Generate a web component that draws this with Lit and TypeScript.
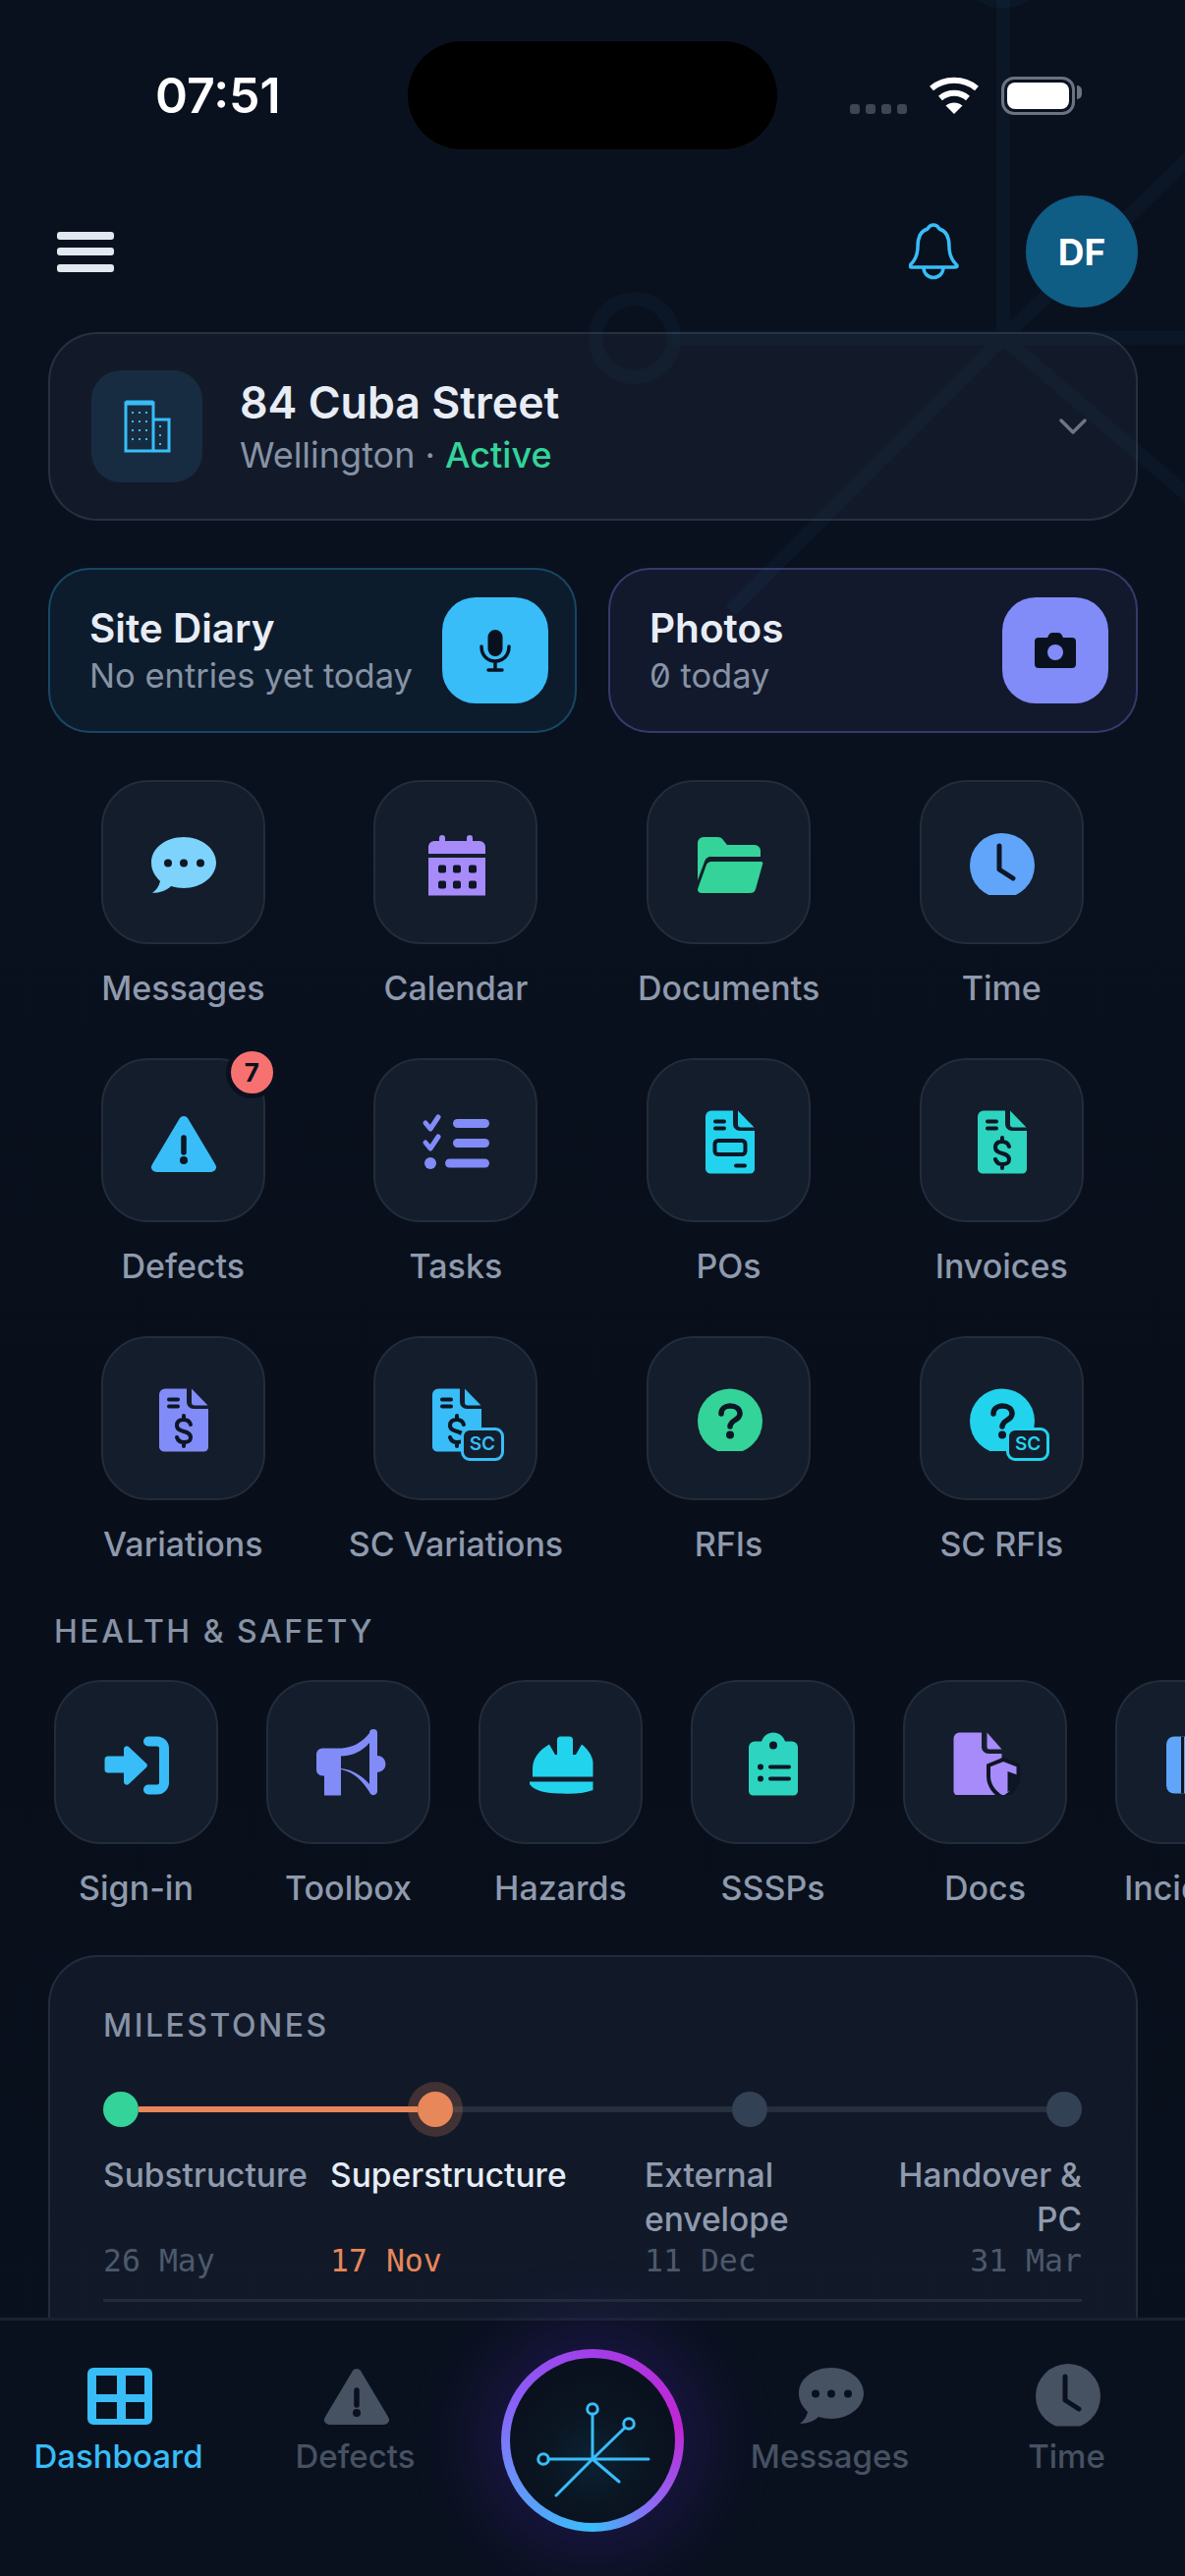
import { LitElement, css, html, svg } from 'lit';
import { customElement } from 'lit/decorators.js';

// 72x72 icon shapes, fill comes from currentColor and the cut-outs from --cut
const chat = svg`<path fill="currentColor" d="M37 10C19 10 4 21 4 36c0 8 4 14 9 19-1 5-4 9-8 12 8 0 15-3 19-7 4 1 9 2 13 2 18 0 33-12 33-26S55 10 37 10Z"/>
  <circle class="cut" cx="21" cy="36.5" r="4"/><circle class="cut" cx="37" cy="36.5" r="4"/><circle class="cut" cx="54" cy="36.5" r="4"/>`;
const calendar = svg`<path fill="currentColor" d="M19 11a3 3 0 0 1 6 0v3h22v-3a3 3 0 0 1 6 0v3h7a6 6 0 0 1 6 6v7H8v-7a6 6 0 0 1 6-6h5ZM8 31h58v38.500H8Z"/>
  ${[22, 37, 53].map((x) => svg`<rect class="cut" x=${x - 4} y="38.500" width="8" height="8" rx="2"/><rect class="cut" x=${x - 4} y="54.500" width="8" height="8" rx="2"/>`)}`;
const folder = svg`<path fill="currentColor" d="M4 16a6 6 0 0 1 6-6h14c3 0 5 1 6 3l4 5h28a6 6 0 0 1 6 6v6H18c-4 0-6 2-7 5L4 54Z"/>
  <path fill="currentColor" d="M18 35h50c2 0 3 1 2 3l-7 25c-1 3-3 4-6 4H8c-3 0-4-2-4-4l9-25c1-2 3-3 5-3Z"/>`;
const clock = svg`<circle fill="currentColor" cx="37" cy="39" r="33"/><path class="cut-line" stroke-width="5" d="M34 19v24l14 9"/>`;
const warn = svg`<path fill="currentColor" d="M33 13a5 5 0 0 1 8 0l28 47a5 5 0 0 1-4 8H9a5 5 0 0 1-4-8Z"/>
  <path class="cut-line" stroke-width="5.500" d="M37 33v15"/><circle class="cut" cx="37" cy="56" r="4"/>`;
const tasks = svg`<path fill="none" stroke="currentColor" stroke-width="5" stroke-linecap="round" stroke-linejoin="round" d="M5 18l5 6 8-12M5 38l5 6 8-12"/>
  <circle fill="currentColor" cx="10" cy="59" r="6"/>
  <rect fill="currentColor" x="33" y="14" width="37" height="9" rx="4.500"/><rect fill="currentColor" x="33" y="34" width="37" height="9" rx="4.500"/><rect fill="currentColor" x="25" y="54.500" width="45" height="9" rx="4.500"/>`;
const page = svg`<path fill="currentColor" d="M18 5.500h22V19a7 7 0 0 0 7 7h15v39a4.500 4.500 0 0 1-4.500 4.500h-41A5.500 5.500 0 0 1 12 65V11.500a6 6 0 0 1 6-6Z"/>
  <path fill="currentColor" d="M45 5.500 61.500 22.500H48a3 3 0 0 1-3-3Z"/>
  <path class="cut-line" stroke-width="4" d="M22 16.500h9M22 23.500h9"/>`;
const po = svg`${page}<rect class="cut-line" stroke-width="4" x="21.500" y="36" width="31" height="14" rx="3.500"/><path class="cut-line" stroke-width="4" d="M43 61.500h9"/>`;
const dollar = svg`<path class="cut-line" stroke-width="4" d="M44 42c-1-3-3-5-7-5-5 0-7 2-7 6 0 8 14 4 14 12 0 4-2 5-7 5-4 0-6-2-7-5M37 33v4M37 60v4"/>`;
const invoice = svg`${page}${dollar}`;
const question = svg`<circle fill="currentColor" cx="37" cy="38.500" r="33"/>
  <path class="cut-line" stroke-width="5.500" d="M28 31c0-5 4-8 9-8 6 0 10 3 10 8 0 7-10 6-10 13"/><circle class="cut" cx="37" cy="52.500" r="4"/>`;
const signin = svg`<path fill="currentColor" d="M7 29.500h16V22a3 3 0 0 1 5-2l18 17a3 3 0 0 1 0 4L28 58a3 3 0 0 1-5-2v-9.500H7a3.500 3.500 0 0 1-3.500-3.500V33A3.500 3.500 0 0 1 7 29.500Z"/>
  <path fill="none" stroke="currentColor" stroke-width="10" stroke-linecap="round" d="M48 14.500h9a7 7 0 0 1 7 7v35a7 7 0 0 1-7 7h-9"/>`;
const horn = svg`<path fill="currentColor" fill-rule="evenodd" d="M9 21.500h17C40 21.500 50 15 57 6a4 4 0 0 1 8 0v23a8.500 8.500 0 0 1 0 17v18a4 4 0 0 1-8 2C50 55 42 46 28 43v26.500H11v-20H9a6 6 0 0 1-6-6V27.500a6 6 0 0 1 6-6ZM28 29.500V42c12 1 22 8 29 16V16C50 24 40 29.500 28 29.500Z"/>`;
const hat = svg`<path fill="currentColor" d="M7 50.500V43c0-11 6-19 17-25.500L30 28h2V13a3.500 3.500 0 0 1 3.500-3.500h9A3.500 3.500 0 0 1 48 13v15h3l6-10.500C63 22 68.500 30 68.500 36v14.500Z"/>
  <path fill="currentColor" d="M4 55.500h64.500V64c-10 4-22 4-32 3.500C20 68 8 64 4 58Z"/>`;
const clipboard = svg`<path fill="currentColor" d="M17 14.500h7C26 9 30 5.500 36 5.500S46 9 48 14.500h7a6 6 0 0 1 6 6V65a4.500 4.500 0 0 1-4.500 4.500h-41A4.500 4.500 0 0 1 11 65V20.500a6 6 0 0 1 6-6Z"/>
  <circle class="cut" cx="36" cy="18.500" r="4"/><circle class="cut" cx="23" cy="40.500" r="3"/><circle class="cut" cx="23" cy="52.500" r="3"/>
  <path class="cut-line" stroke-width="4" d="M33 40.500h19M33 52.500h19"/>`;
const shieldDoc = svg`<path fill="currentColor" d="M9.500 5.500H32V20a7 7 0 0 0 7 7h13.500v42.500H8A4.500 4.500 0 0 1 3.500 65V11.500a6 6 0 0 1 6-6Z"/>
  <path fill="currentColor" d="M37.500 5.500 52.500 22.500H40a2.500 2.500 0 0 1-2.500-2.500Z"/>
  <path fill="currentColor" class="cut-edge" d="M54 33l15.500 6v11c0 10-7.500 18-15.500 22-8-4-15-12-15-22V39Z"/>
  <path class="cut" d="M58.500 45 69.500 49v6c-2.500 5-7.500 9-11 11Z"/>`;
const incident = svg`<rect fill="currentColor" x="4" y="9.500" width="60" height="58" rx="8"/><path class="cut-line" stroke-width="3" d="M20.500 9.500v58" style="stroke-linecap:butt"/>`;
const grid = svg`<path fill="currentColor" fill-rule="evenodd" d="M10 10h54a6 6 0 0 1 6 6v46a6 6 0 0 1-6 6H10a6 6 0 0 1-6-6V16a6 6 0 0 1 6-6ZM13 18v19h21V18ZM43 18v19h19V18ZM13 45v17h21V45ZM43 45v17h19V45Z"/>`;

interface Tool {
  label: string;
  icon: unknown;
  color: string;
  sc?: boolean;
  cut?: boolean;
  badge?: number;
}

const PROJECT_TOOLS: Tool[] = [
  { label: 'Messages', icon: chat, color: '#7dd3fc' },
  { label: 'Calendar', icon: calendar, color: '#a78bfa' },
  { label: 'Documents', icon: folder, color: '#34d399' },
  { label: 'Time', icon: clock, color: '#60a5fa', cut: true },
  { label: 'Defects', icon: warn, color: '#38bdf8', badge: 7 },
  { label: 'Tasks', icon: tasks, color: '#818cf8' },
  { label: 'POs', icon: po, color: '#22d3ee' },
  { label: 'Invoices', icon: invoice, color: '#2dd4bf' },
  { label: 'Variations', icon: invoice, color: '#818cf8' },
  { label: 'SC Variations', icon: invoice, color: '#38bdf8', sc: true },
  { label: 'RFIs', icon: question, color: '#34d399', cut: true },
  { label: 'SC RFIs', icon: question, color: '#22d3ee', sc: true, cut: true },
];

const SAFETY_TOOLS: Tool[] = [
  { label: 'Sign-in', icon: signin, color: '#38bdf8' },
  { label: 'Toolbox', icon: horn, color: '#818cf8' },
  { label: 'Hazards', icon: hat, color: '#22d3ee' },
  { label: 'SSSPs', icon: clipboard, color: '#2dd4bf' },
  { label: 'Docs', icon: shieldDoc, color: '#a78bfa', cut: true },
  { label: 'Incidents', icon: incident, color: '#60a5fa' },
];

const MILESTONES = [
  { name: 'Substructure', date: '26 May', state: 'done' },
  { name: 'Superstructure', date: '17 Nov', state: 'now' },
  { name: 'External envelope', date: '11 Dec', state: '' },
  { name: 'Handover & PC', date: '31 Mar', state: 'end' },
];

const NAV_LEFT = [
  { label: 'Dashboard', icon: grid, active: true },
  { label: 'Defects', icon: warn, active: false },
];
const NAV_RIGHT = [
  { label: 'Messages', icon: chat, active: false },
  { label: 'Time', icon: clock, active: false, cut: true },
];

// the network mark, drawn around 0,0 so it can be used small on the button and huge behind the page
const mark = svg`<path d="M-45 0H57M0 0V-46M0 0 33 -32M0 0-37 37M0 0 27 23"/>
  <circle cx="-50" cy="0" r="5.300"/><circle cx="0" cy="-51" r="5.300"/><circle cx="37" cy="-36" r="5.300"/>`;

@customElement('app-root')
export class AppRoot extends LitElement {
  private tile(t: Tool) {
    return html`
      <div class="tool">
        <div class="tile" style="color:${t.color}">
          <div class="glyph">
            <svg class=${t.cut ? 'ico trim' : 'ico'} viewBox="0 0 72 72">${t.icon}</svg>
            ${t.sc ? html`<span class="sc">SC</span>` : ''}
          </div>
          ${t.badge ? html`<span class="count">${t.badge}</span>` : ''}
        </div>
        <span class="tool-label">${t.label}</span>
      </div>
    `;
  }

  private navItem(n: { label: string; icon: unknown; active: boolean; cut?: boolean }) {
    return html`
      <div class=${n.active ? 'nav-item on' : 'nav-item'}>
        <svg class=${n.cut ? 'ico trim' : 'ico'} viewBox="0 0 72 72">${n.icon}</svg>
        <span>${n.label}</span>
      </div>
    `;
  }

  render() {
    return html`
      <div class="screen">
        <svg class="backdrop" width="1206" height="2622">
          <g transform="translate(1021 344) scale(7.5)">${mark}</g>
        </svg>

        <div class="content">
          <div class="status">
            <span class="clock">07:51</span>
            <div class="island"></div>
            <div class="indicators">
              <div class="signal"><i></i><i></i><i></i><i></i></div>
              <svg width="52" height="38" viewBox="0 0 52 38">
                <path fill="none" stroke="#fff" stroke-width="6" d="M3 12C16 1 36 1 49 12M12 22c8-7 20-7 28 0"/>
                <path fill="#fff" d="M26 38l-8.500-8.500c5-4 12-4 17 0Z"/>
              </svg>
              <div class="battery"><b></b></div>
            </div>
          </div>

          <header class="top">
            <div class="burger"><i></i><i></i><i></i></div>
            <div class="top-right">
              <svg width="52" height="58" viewBox="0 0 52 58" fill="none" stroke="#38bdf8" stroke-width="3.500" stroke-linejoin="round">
                <path d="M25 2c3 0 5 2 6 4 7 2 10 9 10 18s3 14 7 18c2 2 1 3-1 3H3c-2 0-3-1-1-3 4-4 7-9 7-18S12 8 19 6c1-2 3-4 6-4Z"/>
                <path d="M15 45c0 14 20 14 20 0"/>
              </svg>
              <div class="avatar">DF</div>
            </div>
          </header>

          <section class="site">
            <div class="site-icon">
              <svg width="48" height="54" viewBox="0 0 48 54" fill="none" stroke="#38bdf8" stroke-width="3">
                <path d="M2 52V3h28v49ZM30 20h16v32H30M2 52h44"/>
                <path d="M2 3h28" stroke-width="5"/>
                <path stroke-dasharray="2 7" stroke-width="2" d="M9 12v36M16 12v36M23 12v36M37 26v22"/>
              </svg>
            </div>
            <div class="site-text">
              <div class="site-name">84 Cuba Street</div>
              <div class="site-sub">Wellington · <em>Active</em></div>
            </div>
            <svg class="chevron" width="28" height="18" viewBox="0 0 28 18" fill="none" stroke="#6b7585" stroke-width="3.500" stroke-linecap="round" stroke-linejoin="round">
              <path d="M2 3l12 12L26 3"/>
            </svg>
          </section>

          <section class="quick">
            <div class="quick-card diary">
              <div class="quick-text">
                <div class="quick-title">Site Diary</div>
                <div class="quick-sub">No entries yet today</div>
              </div>
              <div class="quick-btn">
                <svg width="32" height="44" viewBox="0 0 32 44" fill="none" stroke="#0a111e" stroke-width="3.500" stroke-linecap="round">
                  <rect x="8.500" y="1" width="15" height="27" rx="7.500" fill="#0a111e" stroke="none"/>
                  <path d="M2 18c0 20 28 20 28 0M16 33v8M9 42h14"/>
                </svg>
              </div>
            </div>
            <div class="quick-card photos">
              <div class="quick-text">
                <div class="quick-title">Photos</div>
                <div class="quick-sub"><span class="zero">0</span> today</div>
              </div>
              <div class="quick-btn">
                <svg width="44" height="38" viewBox="0 0 44 38">
                  <path fill="#0a111e" d="M14 6l1.500-3a4 4 0 0 1 3.500-2h6a4 4 0 0 1 3.500 2L30 6h9a4 4 0 0 1 4 4v23a4 4 0 0 1-4 4H5a4 4 0 0 1-4-4V10a4 4 0 0 1 4-4Z"/>
                  <circle cx="22" cy="21" r="8" fill="#818cf8"/>
                </svg>
              </div>
            </div>
          </section>

          <section class="tools">${PROJECT_TOOLS.map((t) => this.tile(t))}</section>

          <h2 class="section-title">HEALTH &amp; SAFETY</h2>
          <section class="safety">${SAFETY_TOOLS.map((t) => this.tile(t))}</section>

          <section class="milestones">
            <h2 class="section-title inner">MILESTONES</h2>
            <div class="track">
              <i class="dot done"></i><i class="rail done"></i>
              <i class="dot now"></i><i class="rail"></i>
              <i class="dot"></i><i class="rail"></i>
              <i class="dot"></i>
            </div>
            <div class="stones">
              ${MILESTONES.map((m) => html`<div class="stone-name ${m.state}">${m.name}</div>`)}
              ${MILESTONES.map((m) => html`<div class="stone-date ${m.state}">${m.date}</div>`)}
            </div>
            <div class="rule"></div>
          </section>
        </div>

        <nav class="nav">
          ${NAV_LEFT.map((n) => this.navItem(n))}
          <div class="fab-cell">
            <div class="fab">
              <div class="fab-inner">
                <svg width="168" height="168" viewBox="-84 -84 168 168">
                  <g transform="translate(0 19)">${mark}</g>
                </svg>
              </div>
            </div>
          </div>
          ${NAV_RIGHT.map((n) => this.navItem(n))}
        </nav>
      </div>
    `;
  }

  static styles = css`
    :host {
      display: block;
      font-family: 'Inter', 'Noto Sans', sans-serif;
    }

    .screen {
      position: relative;
      width: 1206px;
      height: 2622px;
      overflow: hidden;
      background: linear-gradient(#0a111e 0%, #0a111e 30%, #080f1b 60%, #0a111e 100%);
      --cut: #0d1624;
    }

    .backdrop {
      position: absolute;
      inset: 0;
      fill: none;
      stroke: rgba(56, 189, 248, 0.04);
      stroke-width: 1.9;
    }
    .content {
      position: relative;
    }

    .status {
      display: flex;
      align-items: center;
      height: 110px;
      padding: 42px 106px 42px 158px;
    }
    .clock {
      width: 257px;
      color: #fff;
      font-size: 50px;
      font-weight: 600;
    }
    .island {
      width: 376px;
      height: 110px;
      border-radius: 55px;
      background: #000;
    }
    .indicators {
      display: flex;
      align-items: center;
      margin-left: 74px;
      gap: 22px;
    }
    .signal {
      display: flex;
      gap: 6px;
      align-self: flex-end;
      padding-bottom: 1px;
    }
    .signal i {
      width: 10px;
      height: 10px;
      border-radius: 3px;
      background: #3d4653;
    }
    .battery {
      position: relative;
      width: 63px;
      height: 27px;
      padding: 3px;
      border: 3px solid #6b7280;
      border-radius: 13px;
    }
    .battery b {
      display: block;
      height: 100%;
      border-radius: 8px;
      background: #fff;
    }
    .battery::after {
      content: '';
      position: absolute;
      right: -10px;
      top: 6px;
      width: 5px;
      height: 14px;
      border-radius: 0 7px 7px 0;
      background: #6b7280;
    }

    .top {
      display: flex;
      align-items: center;
      justify-content: space-between;
      height: 114px;
      padding: 5px 48px 0 58px;
    }
    .burger {
      display: flex;
      flex-direction: column;
      gap: 8.5px;
    }
    .burger i {
      width: 58px;
      height: 8px;
      border-radius: 3px;
      background: #e2e8f0;
    }
    .top-right {
      display: flex;
      align-items: center;
      gap: 67px;
    }
    .avatar {
      display: grid;
      place-items: center;
      width: 114px;
      height: 114px;
      border-radius: 50%;
      background: #0f5c85;
      color: #fff;
      font-size: 37px;
      font-weight: 700;
    }

    .site {
      display: flex;
      align-items: center;
      box-sizing: border-box;
      height: 192px;
      margin: 25px 48px 0 49px;
      padding: 0 50px 0 42px;
      border: 2px solid rgba(148, 163, 184, 0.16);
      border-radius: 50px;
      background: rgba(30, 41, 59, 0.42);
    }
    .site-icon {
      display: grid;
      place-items: center;
      width: 113px;
      height: 114px;
      border-radius: 30px;
      background: #172c40;
    }
    .site-text {
      flex: 1;
      margin-left: 38px;
    }
    .site-name {
      color: #e8edf5;
      font-size: 44.7px;
      font-weight: 600;
      line-height: 56px;
    }
    .site-sub {
      color: #8793a5;
      font-size: 36px;
      line-height: 46px;
      margin-top: 2px;
    }
    .site-sub em {
      color: #34d399;
      font-style: normal;
      font-weight: 500;
    }

    .quick {
      display: grid;
      grid-template-columns: 538px 539px;
      gap: 32px;
      margin: 48px 0 0 49px;
    }
    .quick-card {
      display: flex;
      align-items: center;
      justify-content: space-between;
      box-sizing: border-box;
      height: 168px;
      padding: 0 27px 0 40px;
      border: 2px solid;
      border-radius: 42px;
    }
    .diary {
      border-color: rgba(56, 189, 248, 0.27);
      background: rgba(56, 189, 248, 0.07);
    }
    .photos {
      padding-right: 28px;
      border-color: rgba(129, 140, 248, 0.3);
      background: rgba(129, 140, 248, 0.07);
    }
    .quick-title {
      color: #e8edf5;
      font-size: 40.5px;
      font-weight: 600;
      line-height: 50px;
    }
    .quick-sub {
      color: #8793a5;
      font-size: 34.5px;
      line-height: 42px;
      margin-top: 2px;
    }
    .zero {
      font-feature-settings: 'zero';
    }
    .quick-btn {
      display: grid;
      place-items: center;
      width: 108px;
      height: 108px;
      border-radius: 34px;
    }
    .diary .quick-btn {
      background: #38bdf8;
    }
    .photos .quick-btn {
      background: #818cf8;
    }

    .tools {
      display: grid;
      grid-template-columns: repeat(4, 1fr);
      row-gap: 49px;
      margin: 48px 48px 0 47.5px;
    }
    .tool {
      display: flex;
      flex-direction: column;
      align-items: center;
      flex: none;
      gap: 23px;
    }
    .tile {
      position: relative;
      display: grid;
      place-items: center;
      box-sizing: border-box;
      width: 167px;
      height: 167px;
      border: 2px solid #232c3a;
      border-radius: 48px;
      background: #141d2b;
    }
    .glyph {
      position: relative;
      width: 72px;
      height: 72px;
    }
    .ico {
      display: block;
      width: 72px;
      height: 72px;
      overflow: visible;
    }
    .ico .cut {
      fill: var(--cut);
    }
    .ico .cut-line {
      fill: none;
      stroke: var(--cut);
      stroke-linecap: round;
      stroke-linejoin: round;
    }
    .ico .cut-edge {
      stroke: var(--cut);
      stroke-width: 4;
    }
    .trim {
      clip-path: inset(0 0 2.5px 0);
    }
    .tool-label {
      color: #8f9aad;
      font-size: 34px;
      font-weight: 500;
      line-height: 44px;
      white-space: nowrap;
    }
    .sc {
      position: absolute;
      left: 41px;
      top: 45px;
      box-sizing: border-box;
      width: 44px;
      height: 34px;
      border: 3px solid currentColor;
      border-radius: 9px;
      background: #141d2b;
      font-size: 19px;
      font-weight: 600;
      line-height: 27px;
      text-align: center;
    }
    .count {
      position: absolute;
      right: -15px;
      top: -14px;
      box-sizing: border-box;
      width: 53px;
      height: 53px;
      border: 5px solid #0a111e;
      border-radius: 50%;
      background: #f87171;
      color: #0a111e;
      font-size: 26px;
      font-weight: 700;
      line-height: 43px;
      text-align: center;
    }

    .section-title {
      margin: 47px 0 0 55px;
      color: #8792a5;
      font-size: 32px;
      font-weight: 500;
      line-height: 40px;
      letter-spacing: 2.5px;
    }
    .section-title.inner {
      margin: 0;
    }
    .safety {
      display: flex;
      gap: 49px;
      margin-top: 29px;
      padding-left: 55px;
      overflow: hidden;
    }
    .safety .tool {
      width: 167px;
    }

    .milestones {
      box-sizing: border-box;
      height: 480px;
      margin: 46px 48px 0 49px;
      padding: 50px 55px 0 54px;
      border: 2px solid rgba(148, 163, 184, 0.14);
      border-radius: 50px;
      background: rgba(30, 41, 59, 0.4);
    }
    .track {
      display: flex;
      align-items: center;
      height: 57px;
      margin-top: 36px;
    }
    .dot {
      flex: none;
      width: 36px;
      height: 36px;
      border-radius: 50%;
      background: #334155;
    }
    .dot.done {
      background: #34d399;
    }
    .dot.now {
      position: relative;
      background: #e8875a;
      box-shadow: 0 0 0 10px rgba(232, 135, 90, 0.22);
    }
    .rail {
      flex: 1;
      height: 6px;
      background: #262f3d;
    }
    .rail.done {
      background: #e8875a;
    }
    .stones {
      display: grid;
      grid-template-columns: 231px 320px 241px 204px;
      margin-top: 17px;
    }
    .stone-name {
      color: #8f9aad;
      font-size: 33.5px;
      font-weight: 500;
      line-height: 45px;
    }
    .stone-name.now {
      color: #e8edf5;
    }
    .stone-date {
      color: #4d596b;
      font-family: 'DejaVu Sans Mono', 'Liberation Mono', monospace;
      font-size: 31.5px;
      line-height: 39px;
    }
    .stone-date.now {
      color: #e8875a;
    }
    .end {
      text-align: right;
    }
    .rule {
      height: 3px;
      margin-top: 19px;
      background: #222b39;
    }

    .nav {
      position: absolute;
      left: 0;
      right: 0;
      bottom: 0;
      display: grid;
      grid-template-columns: 241px 241px 242px 241px 241px;
      height: 263px;
      box-sizing: border-box;
      border-top: 3px solid #1a2230;
      background: #0a111e;
      --cut: #0a111e;
    }
    .nav-item {
      display: flex;
      flex-direction: column;
      align-items: center;
      gap: 6px;
      padding-top: 38px;
      color: #465162;
      font-size: 33px;
      font-weight: 500;
      line-height: 44px;
    }
    .nav-item.on {
      color: #38bdf8;
    }
    .fab-cell {
      display: flex;
      justify-content: center;
      padding-top: 29px;
    }
    .fab {
      box-sizing: border-box;
      width: 186px;
      height: 186px;
      padding: 9px;
      border-radius: 50%;
      background: conic-gradient(#a23ee8 0deg, #c026d3 80deg, #8b6cf6 140deg, #38bdf8 180deg, #6f8cfb 250deg, #8b5cf6 300deg, #a23ee8 360deg);
      box-shadow: 0 0 70px 24px rgba(88, 40, 210, 0.22);
    }
    .fab-inner {
      width: 168px;
      height: 168px;
      border-radius: 50%;
      background: radial-gradient(circle at 50% 61%, #0c2235 0%, #0a1622 35%, #0a111e 65%);
    }
    .fab-inner svg {
      display: block;
      fill: none;
      stroke: #38bdf8;
      stroke-width: 3;
      stroke-linecap: round;
    }
  `;
}

declare global {
  interface HTMLElementTagNameMap {
    'app-root': AppRoot;
  }
}
